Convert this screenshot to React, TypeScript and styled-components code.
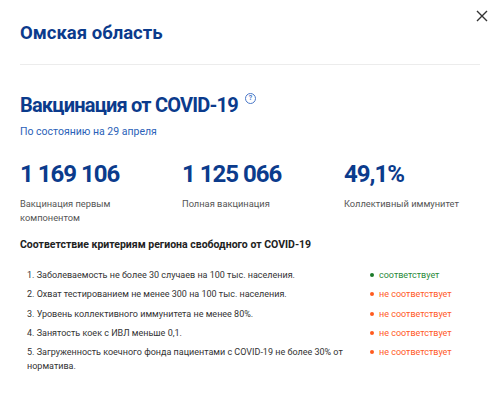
import styled, { createGlobalStyle } from "styled-components";

const GlobalStyle = createGlobalStyle`
  body {
    margin: 0;
    background: #ffffff;
    font-family: Roboto, "Liberation Sans", Arial, sans-serif;
  }
`;

const Modal = styled.div`
  position: relative;
  width: 500px;
  height: 393px;
  box-sizing: border-box;
  padding: 0 20px;
  background: #fff;
  overflow: hidden;
`;

const CloseButton = styled.button`
  position: absolute;
  top: 8px;
  right: 10px;
  width: 16px;
  height: 16px;
  padding: 0;
  border: none;
  background: none;
  display: flex;
  align-items: center;
  justify-content: center;
  cursor: pointer;
`;

const Header = styled.div`
  height: 65px;
  box-sizing: border-box;
  border-bottom: 1px solid #ececec;
  display: flex;
  align-items: flex-start;
  padding-top: 21px;
`;

const RegionTitle = styled.h1`
  margin: 0;
  font-size: 18.5px;
  line-height: 24px;
  font-weight: 700;
  color: #0b3b8c;
`;

const Section = styled.div`
  padding-top: 27px;
`;

const SectionTitle = styled.h2`
  margin: 0;
  font-size: 20px;
  line-height: 26px;
  letter-spacing: -0.8px;
  font-weight: 700;
  color: #0b3b8c;
  display: flex;
  align-items: flex-start;
  gap: 7px;
`;

const Hint = styled.span`
  margin-top: 1px;
  width: 9px;
  height: 9px;
  border: 1px solid #4a78c8;
  border-radius: 50%;
  color: #4a78c8;
  font-size: 7px;
  line-height: 9px;
  letter-spacing: 0;
  font-weight: 700;
  text-align: center;
`;

const Updated = styled.div`
  margin-top: 7px;
  font-size: 10.5px;
  line-height: 14px;
  color: #2a5fb8;
`;

const Stats = styled.div`
  margin-top: 21px;
  display: grid;
  grid-template-columns: 162px 162px 1fr;
`;

const Stat = styled.div`
  display: flex;
  flex-direction: column;
`;

const StatValue = styled.div`
  font-size: 24px;
  line-height: 28px;
  letter-spacing: -1px;
  font-weight: 700;
  color: #0b3b8c;
`;

const StatLabel = styled.div`
  margin-top: 9px;
  width: 130px;
  font-size: 9.3px;
  line-height: 14px;
  color: #555;
`;

const CriteriaTitle = styled.div`
  margin-top: 13px;
  font-size: 10.5px;
  line-height: 14px;
  font-weight: 700;
  color: #222;
`;

const CriteriaList = styled.ol`
  list-style: none;
  margin: 16px 0 0;
  padding: 0 0 0 7px;
  display: flex;
  flex-direction: column;
  gap: 5.25px;
`;

const CriteriaRow = styled.li`
  display: grid;
  grid-template-columns: 343px 1fr;
  font-size: 9px;
  line-height: 14px;
  color: #333;
`;

const CriteriaText = styled.span`
  padding-right: 14px;
`;

const Status = styled.span<{ $ok: boolean }>`
  display: flex;
  align-items: flex-start;
  gap: 5px;
  color: ${(p) => (p.$ok ? "#2a8a3a" : "#ff5a1f")};
  &::before {
    content: "";
    margin-top: 5px;
    width: 4px;
    height: 4px;
    border-radius: 50%;
    background: ${(p) => (p.$ok ? "#1a7a2a" : "#ff5a1f")};
  }
`;

const stats = [
  { value: "1 169 106", label: "Вакцинация первым компонентом" },
  { value: "1 125 066", label: "Полная вакцинация" },
  { value: "49,1%", label: "Коллективный иммунитет" },
];

const criteria = [
  { text: "1. Заболеваемость не более 30 случаев на 100 тыс. населения.", ok: true },
  { text: "2. Охват тестированием не менее 300 на 100 тыс. населения.", ok: false },
  { text: "3. Уровень коллективного иммунитета не менее 80%.", ok: false },
  { text: "4. Занятость коек с ИВЛ меньше 0,1.", ok: false },
  {
    text: "5. Загруженность коечного фонда пациентами с COVID-19 не более 30% от норматива.",
    ok: false,
  },
];

export default function App() {
  return (
    <>
      <GlobalStyle />
      <Modal>
        <CloseButton aria-label="Закрыть">
          <svg width="12" height="12" viewBox="0 0 12 12">
            <path d="M1 1L11 11M11 1L1 11" stroke="#333" strokeWidth="1.4" />
          </svg>
        </CloseButton>
        <Header>
          <RegionTitle>Омская область</RegionTitle>
        </Header>
        <Section>
          <SectionTitle>
            Вакцинация от COVID-19
            <Hint>?</Hint>
          </SectionTitle>
          <Updated>По состоянию на 29 апреля</Updated>
          <Stats>
            {stats.map((s) => (
              <Stat key={s.value}>
                <StatValue>{s.value}</StatValue>
                <StatLabel>{s.label}</StatLabel>
              </Stat>
            ))}
          </Stats>
          <CriteriaTitle>Соответствие критериям региона свободного от COVID-19</CriteriaTitle>
          <CriteriaList>
            {criteria.map((c) => (
              <CriteriaRow key={c.text}>
                <CriteriaText>{c.text}</CriteriaText>
                <Status $ok={c.ok}>{c.ok ? "соответствует" : "не соответствует"}</Status>
              </CriteriaRow>
            ))}
          </CriteriaList>
        </Section>
      </Modal>
    </>
  );
}
